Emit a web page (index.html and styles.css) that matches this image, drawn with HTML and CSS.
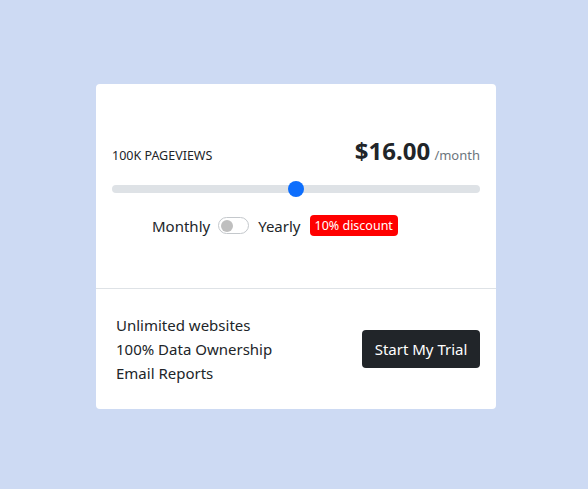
FILE: index.html
```html
<!DOCTYPE html>
<html lang="en">
<head>
<meta charset="utf-8">
<link rel="stylesheet" href="styles.css">
</head>
<body>
<div class="card">
  <div class="card-top">
    <div class="head">
      <span class="views">100K PAGEVIEWS</span>
      <span class="price"><strong>$16.00</strong> <span class="per">/month</span></span>
    </div>
    <div class="slider"><div class="thumb"></div></div>
    <div class="billing">
      <span>Monthly</span>
      <span class="switch"><span class="knob"></span></span>
      <span class="yearly">Yearly</span>
      <span class="badge">10% discount</span>
    </div>
  </div>
  <div class="card-bottom">
    <ul class="features">
      <li>Unlimited websites</li>
      <li>100% Data Ownership</li>
      <li>Email Reports</li>
    </ul>
    <button class="btn">Start My Trial</button>
  </div>
</div>
</body>
</html>
```
FILE: styles.css
```css
html, body {
  margin: 0;
  padding: 0;
}
body {
  background: #cddaf3;
  font-family: "Noto Sans", "Open Sans", sans-serif;
  color: #212529;
  width: 588px;
  height: 489px;
  padding: 84px 0 0 96px;
  box-sizing: border-box;
}
.card {
  width: 400px;
  height: 325px;
  background: #fff;
  border-radius: 4px;
  display: flex;
  flex-direction: column;
}
.card-top {
  height: 205px;
  border-bottom: 1px solid #dee2e6;
  padding: 50px 16px 0;
  box-sizing: border-box;
}
.head {
  display: flex;
  justify-content: space-between;
  align-items: baseline;
}
.views {
  font-size: 12.5px;
}
.price strong {
  font-size: 24px;
  font-weight: 700;
}
.per {
  font-size: 13px;
  color: #6c757d;
}
.slider {
  margin-top: 18px;
  height: 8px;
  border-radius: 4px;
  background: #dee2e6;
  position: relative;
}
.thumb {
  position: absolute;
  left: 176px;
  top: -4px;
  width: 16px;
  height: 16px;
  border-radius: 50%;
  background: #0d6efd;
}
.billing {
  display: flex;
  align-items: center;
  margin-top: 22px;
  padding-left: 40px;
  font-size: 15px;
}
.switch {
  width: 26px;
  height: 15px;
  border: 1px solid #c4c8cc;
  border-radius: 9px;
  margin: 0 9px 0 8px;
  display: inline-flex;
  align-items: center;
  padding: 0 1px 0 2px;
  box-sizing: content-box;
}
.knob {
  width: 12px;
  height: 12px;
  border-radius: 50%;
  background: #bfbfbf;
}
.badge {
  margin-left: 9px;
  background: #ff0000;
  color: #fff;
  font-size: 12.5px;
  line-height: 17px;
  padding: 2px 5px;
  border-radius: 4px;
}
.card-bottom {
  flex: 1;
  display: flex;
  align-items: center;
  justify-content: space-between;
  padding: 0 16px 0 20px;
}
.features {
  list-style: none;
  margin: 0;
  padding: 0;
  font-size: 15px;
  line-height: 24px;
}
.btn {
  background: #212529;
  color: #fff;
  border: none;
  border-radius: 4px;
  font-family: inherit;
  font-size: 15px;
  padding: 0 12px;
  height: 38px;
  width: 118px;
}
```
